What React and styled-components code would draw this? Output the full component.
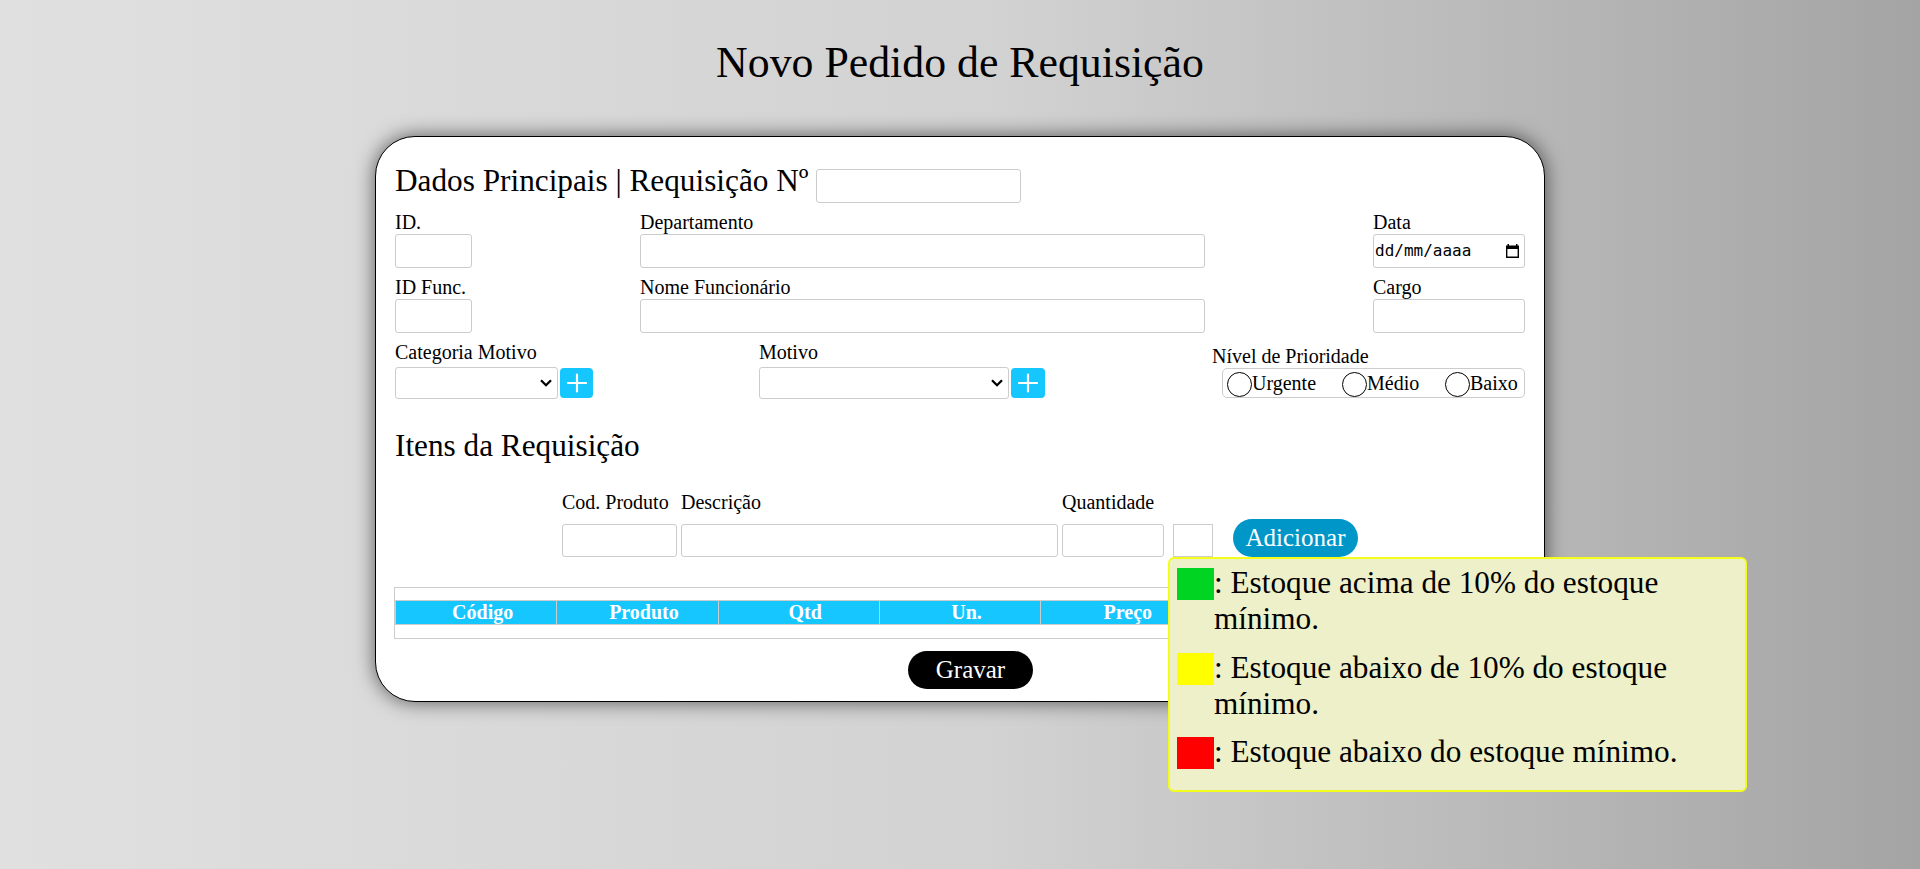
import React from "react";
import styled, { createGlobalStyle, css } from "styled-components";

const Global = createGlobalStyle`
  * { box-sizing: border-box; }
  body {
    margin: 0;
    font-family: "Liberation Serif", "Times New Roman", serif;
    font-size: 20px;
    line-height: 22px;
    color: #000;
  }
  button, select { font-family: inherit; }
`;

const Page = styled.main`
  display: flex;
  flex-direction: column;
  align-items: center;
  height: 869px;
  overflow: hidden;
  background: linear-gradient(90deg, #e0e0e0, #d2d2d2 52%, #a4a4a4);
`;

const Title = styled.h1`
  margin: 37px 0 49px;
  font-size: 43.8px;
  font-weight: 400;
  line-height: 50px;
`;

const Card = styled.form`
  display: flex;
  flex-direction: column;
  width: 1170px;
  height: 566px;
  padding: 26px 19px 0;
  border: 1px solid #000;
  border-radius: 40px;
  background: #fff;
  box-shadow: 0 0 20px rgba(0, 0, 0, 0.6);
`;

const Heading = styled.h2`
  display: flex;
  margin: 0;
  font-size: 31.25px;
  font-weight: 400;
  line-height: 36px;
`;

const field = css`
  flex: none;
  width: ${(p) => p.$w}px;
  height: ${(p) => p.$h || 34}px;
  border: 1px solid #ccc;
  border-radius: ${(p) => (p.$square ? 0 : 3)}px;
  background: #fff;
`;

const Input = styled.input`
  ${field}
  display: block;
  margin: 0;
  padding: 1px 2px;
  outline: none;
`;

const NumberInput = styled(Input)`
  margin: 6px 0 0 7.6px;
`;

const DateBox = styled.div`
  ${field}
  display: flex;
  align-items: center;
  justify-content: space-between;
  padding: 0 5px 1px 1px;
  font-family: "DejaVu Sans Mono", monospace;
  font-size: 16px;
`;

const Row = styled.div`
  display: flex;
  justify-content: space-between;
  margin-top: ${(p) => p.$top}px;
`;

const Field = styled.div`
  display: flex;
  flex-direction: column;
  width: ${(p) => p.$w}px;
`;

const Label = styled.label`
  height: ${(p) => p.$h || 22}px;
  line-height: ${(p) => p.$lh || 20}px;
  white-space: nowrap;
`;

const SelectLine = styled.div`
  display: flex;
  align-items: center;
  gap: 2px;
`;

const Select = styled.div`
  ${field}
  display: flex;
  align-items: center;
  justify-content: flex-end;
  padding-right: 5px;
`;

const PlusButton = styled.button`
  display: grid;
  flex: none;
  place-items: center;
  width: ${(p) => p.$w}px;
  height: 30px;
  padding: 0;
  border: 0;
  border-radius: 4px;
  background: #16c6ff;
`;

const Priority = styled.div`
  display: flex;
  flex-direction: column;
  width: 313px;
  padding-top: 4px;
`;

const RadioBox = styled.div`
  display: flex;
  height: 30px;
  margin-left: 10px;
  padding: 3px 0 0 4px;
  border: 1px solid #ccc;
  border-radius: 5px;
`;

const Radio = styled.label`
  display: flex;
  width: ${(p) => p.$w}px;
  line-height: 23px;
`;

const Circle = styled.span`
  flex: none;
  width: 25px;
  height: 25px;
  border: 1px solid #000;
  border-radius: 50%;
`;

const ItemsRow = styled.div`
  position: relative;
  display: flex;
  align-items: flex-end;
  gap: 4px;
  margin: 27px 0 0 167px;
`;

const Pill = styled.button`
  width: 125px;
  height: 38px;
  padding: 0 0 1px;
  border: 0;
  border-radius: 20px;
  background: ${(p) => p.$bg};
  color: #fff;
  font-size: 25px;
  line-height: 30px;
`;

const AddButton = styled(Pill)`
  margin-left: 16px;
`;

const StockBox = styled.div`
  ${field}
  margin-left: 5px;
`;

const Tooltip = styled.aside`
  position: absolute;
  left: 606px;
  top: 66px;
  width: 579px;
  height: 235px;
  padding: 6px 7px;
  border: 2px solid #f3ff1a;
  border-radius: 6px;
  background: #eef0c9;
  font-size: 31.25px;
  line-height: 36px;
`;

const Legend = styled.div`
  display: flex;
  margin-bottom: 12.5px;
`;

const Swatch = styled.span`
  flex: none;
  width: 37px;
  height: 32px;
  margin-top: 3px;
  background: ${(p) => p.$color};
`;

const TableWrap = styled.div`
  flex: none;
  width: 1133px;
  height: 52px;
  margin: 30px 0 0 -1px;
  padding-top: 12px;
  border: 1px solid #ccc;
`;

const HeadRow = styled.div`
  display: grid;
  grid-template-columns: repeat(7, 161.3px);
  height: 25px;
  border: 1px solid #ccc;
  background: #16c6ff;
`;

const HeadCell = styled.div`
  padding-left: 13px;
  border-right: 1px solid #ccc;
  color: #fff;
  font-weight: 700;
  line-height: 23px;
  text-align: center;
`;

const Footer = styled.div`
  display: flex;
  justify-content: center;
  margin: 12px 0 0 21px;
`;

const Chevron = () => (
  <svg width="12" height="8" viewBox="0 0 12 8" fill="none" stroke="#000" strokeWidth="2.3">
    <path d="M1 1.2 L6 6.2 L11 1.2" />
  </svg>
);

const Plus = () => (
  <svg width="20" height="20" viewBox="0 0 20 20" stroke="#fff" strokeWidth="2.2">
    <path d="M1 10 H19 M10 1.5 V18.5" strokeLinecap="round" />
  </svg>
);

const Calendar = () => (
  <svg width="13" height="14" viewBox="0 0 13 14">
    <path fill="#000" fillRule="evenodd" d="M0 1.5 H1.5 V0 H3 V1.5 H10 V0 H11.5 V1.5 H13 V14 H0 Z M1.4 5 V12.6 H11.6 V5 Z" />
  </svg>
);

const TextField = ({ label, w, h, labelHeight, lh }) => (
  <Field $w={w}>
    <Label $h={labelHeight} $lh={lh}>{label}</Label>
    <Input $w={w} $h={h} />
  </Field>
);

const ItemField = (props) => <TextField h={33} labelHeight={33} lh={22} {...props} />;

const SelectField = ({ label, total, w, bw }) => (
  <Field $w={total}>
    <Label $h={25} $lh={21}>{label}</Label>
    <SelectLine>
      <Select $w={w} $h={32}><Chevron /></Select>
      <PlusButton type="button" $w={bw}><Plus /></PlusButton>
    </SelectLine>
  </Field>
);

const legend = [
  ["#00d423", ": Estoque acima de 10% do estoque mínimo."],
  ["#ffff00", ": Estoque abaixo de 10% do estoque mínimo."],
  ["#ff0000", ": Estoque abaixo do estoque mínimo."],
];

const columns = ["Código", "Produto", "Qtd", "Un.", "Preço", "", ""];

export default function App() {
  return (
    <Page>
      <Global />
      <Title>Novo Pedido de Requisição</Title>
      <Card>
        <Heading>
          Dados Principais | Requisição Nº
          <NumberInput $w={205} />
        </Heading>
        <Row $top={9}>
          <TextField label="ID." w={77} />
          <TextField label="Departamento" w={565} />
          <Field $w={152}>
            <Label>Data</Label>
            <DateBox $w={152}>dd/mm/aaaa<Calendar /></DateBox>
          </Field>
        </Row>
        <Row $top={9}>
          <TextField label="ID Func." w={77} />
          <TextField label="Nome Funcionário" w={565} />
          <TextField label="Cargo" w={152} />
        </Row>
        <Row $top={9}>
          <SelectField label="Categoria Motivo" total={197} w={163} bw={33} />
          <SelectField label="Motivo" total={286} w={250} bw={34} />
          <Priority>
            <Label>Nível de Prioridade</Label>
            <RadioBox>
              <Radio $w={115}><Circle />Urgente</Radio>
              <Radio $w={103}><Circle />Médio</Radio>
              <Radio $w={79}><Circle />Baixo</Radio>
            </RadioBox>
          </Priority>
        </Row>
        <Row $top={29}>
          <Heading>Itens da Requisição</Heading>
        </Row>
        <ItemsRow>
          <ItemField label="Cod. Produto" w={115} />
          <ItemField label="Descrição" w={377} />
          <ItemField label="Quantidade" w={102} />
          <StockBox $w={40} $h={33} $square />
          <AddButton type="button" $bg="#0096c8">Adicionar</AddButton>
          <Tooltip>
            {legend.map(([color, text]) => (
              <Legend key={color}>
                <Swatch $color={color} />
                <span>{text}</span>
              </Legend>
            ))}
          </Tooltip>
        </ItemsRow>
        <TableWrap>
          <HeadRow>
            {columns.map((name, i) => (
              <HeadCell key={i}>{name}</HeadCell>
            ))}
          </HeadRow>
        </TableWrap>
        <Footer>
          <Pill type="button" $bg="#000">Gravar</Pill>
        </Footer>
      </Card>
    </Page>
  );
}
